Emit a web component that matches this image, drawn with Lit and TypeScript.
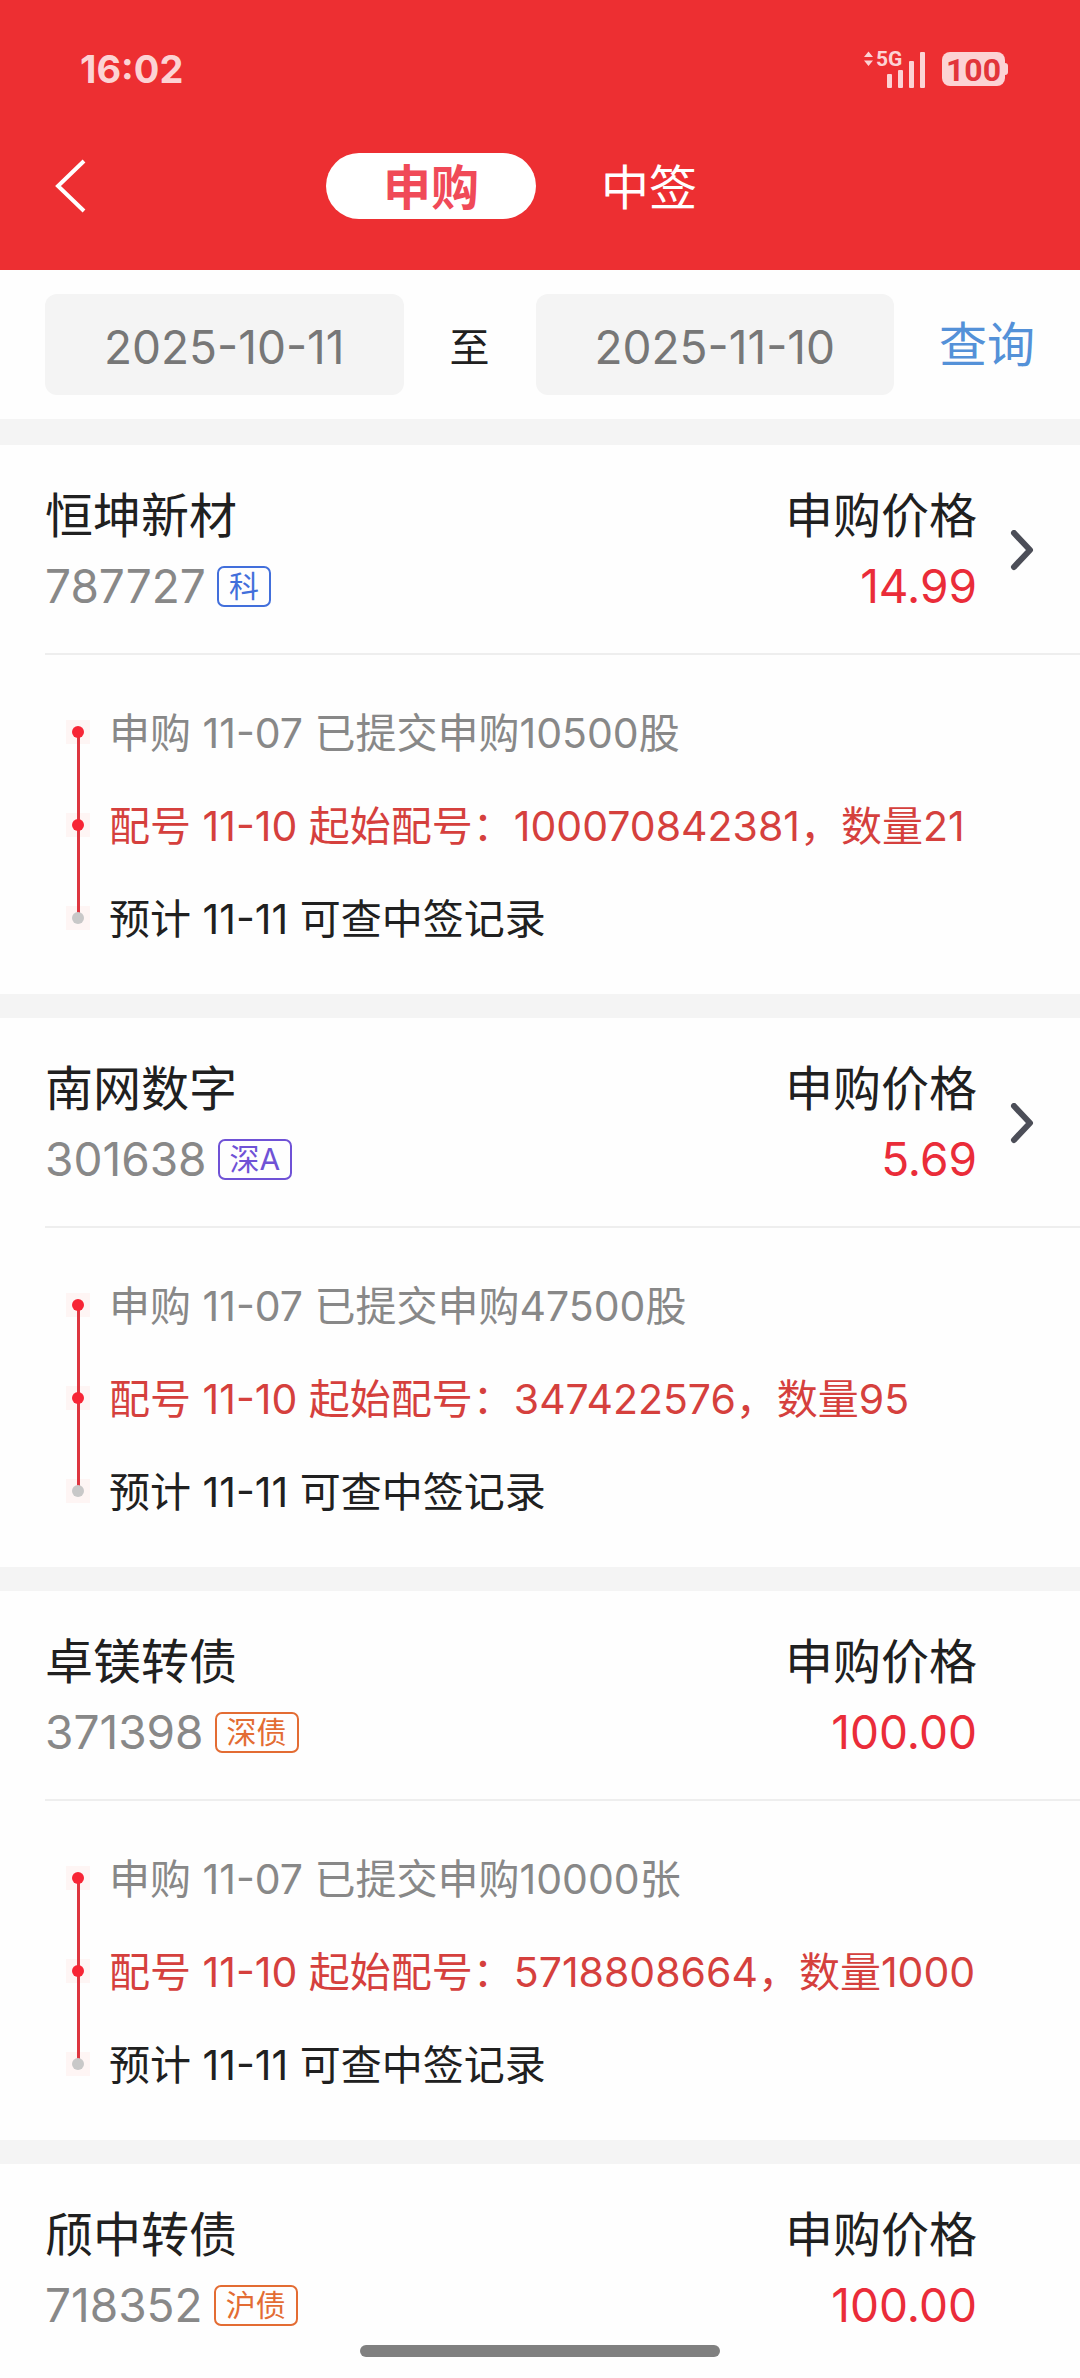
import { LitElement, html, css, nothing, svg } from "lit";
import { customElement, property, state } from "lit/decorators.js";
import { classMap } from "lit/directives/class-map.js";

interface Step {
  kind: "done" | "active" | "pending";
  text: string;
}

interface Offering {
  name: string;
  code: string;
  tag: string;
  tone: "blue" | "purple" | "orange";
  price: string;
  link: boolean;
  steps: Step[];
}

const steps = (submitted: string, start: string, count: string): Step[] => [
  { kind: "done", text: `申购 11-07 已提交申购${submitted}` },
  { kind: "active", text: `配号 11-10 起始配号：${start}，数量${count}` },
  { kind: "pending", text: "预计 11-11 可查中签记录" },
];

const OFFERINGS: Offering[] = [
  { name: "恒坤新材", code: "787727", tag: "科", tone: "blue", price: "14.99", link: true, steps: steps("10500股", "100070842381", "21") },
  { name: "南网数字", code: "301638", tag: "深A", tone: "purple", price: "5.69", link: true, steps: steps("47500股", "347422576", "95") },
  { name: "卓镁转债", code: "371398", tag: "深债", tone: "orange", price: "100.00", link: false, steps: steps("10000张", "5718808664", "1000") },
  { name: "颀中转债", code: "718352", tag: "沪债", tone: "orange", price: "100.00", link: false, steps: [] },
];

@customElement("status-bar")
class StatusBar extends LitElement {
  static styles = css`
    :host {
      display: flex;
      justify-content: space-between;
      align-items: center;
      height: 102px;
      padding: 36px 72px 0 80px;
      box-sizing: border-box;
      color: #fcd3d4;
      font-family: Inter, "Noto Sans CJK SC", sans-serif;
    }
    .time {
      font-size: 38px;
      line-height: 38px;
      font-weight: 700;
    }
    .right {
      display: flex;
      align-items: center;
      gap: 17px;
    }
    .signal {
      position: relative;
      width: 61px;
      height: 37px;
    }
    .signal svg {
      display: block;
    }
    .net {
      position: absolute;
      left: 12px;
      top: -3px;
      font: 700 21px/22px Roboto, sans-serif;
    }
    .battery {
      display: flex;
      align-items: center;
    }
    .cell {
      width: 63px;
      height: 34px;
      border-radius: 8px;
      background: #fcd3d4;
      color: #e2353a;
      text-align: center;
      font: 700 32px/37px Roboto, sans-serif;
    }
    .nub {
      width: 3px;
      height: 12px;
      border-radius: 0 3px 3px 0;
      background: #fcd3d4;
    }
  `;

  render() {
    const bars = [
      [23, 23],
      [34, 19],
      [45, 10],
      [56, 1],
    ];
    return html`
      <span class="time">16:02</span>
      <div class="right">
        <div class="signal">
          <svg width="61" height="37" viewBox="0 0 61 37" fill="currentColor" aria-hidden="true">
            <path d="M0 6 L4.500 0.500 L9 6 Z M0 9.500 H9 L4.500 15 Z" />
            ${bars.map(([x, y]) => svg`<rect x=${x} y=${y} width="5" height=${37 - y} rx="1"></rect>`)}
          </svg>
          <span class="net">5G</span>
        </div>
        <div class="battery">
          <span class="cell">100</span>
          <span class="nub"></span>
        </div>
      </div>
    `;
  }
}

@customElement("offering-card")
class OfferingCard extends LitElement {
  @property({ attribute: false }) item!: Offering;

  static styles = css`
    :host {
      display: block;
      background: #fefefe;
      color: #202020;
      font-size: 48px;
      line-height: 71px;
    }
    .head {
      display: flex;
      justify-content: space-between;
      padding: 35px 45px 31px;
      color: inherit;
      text-decoration: none;
    }
    .code {
      display: flex;
      align-items: center;
      gap: 11px;
      color: #888;
      font-size: 46px;
    }
    .tag {
      box-sizing: border-box;
      height: 41px;
      padding: 0 10px;
      border: 2px solid currentColor;
      border-radius: 7px;
      font-size: 30px;
      line-height: 37px;
    }
    .blue {
      color: #426fdb;
    }
    .purple {
      color: #6f52d6;
    }
    .orange {
      color: #e36c33;
    }
    .right {
      display: flex;
      align-items: center;
      gap: 33px;
      text-align: right;
    }
    .value {
      color: #ea2c39;
      font-size: 46px;
    }
    .chevron {
      display: block;
      width: 25px;
      height: 42px;
    }
    .steps {
      margin: 0;
      padding: 30px 0;
      list-style: none;
      font-size: 41px;
    }
    .body {
      margin-left: 45px;
      border-top: 2px solid #eee;
    }
    .step {
      display: grid;
      grid-template-columns: 24px 1fr;
      column-gap: 19px;
      align-items: center;
      height: 93px;
      padding-left: 21px;
    }
    .label {
      padding-top: 4px;
    }
    .rail {
      display: grid;
      grid-template-rows: 1fr 24px 1fr;
      justify-items: center;
      height: 93px;
    }
    .line {
      width: 3px;
      background: #dd3640;
    }
    .halo {
      display: grid;
      place-items: center;
      width: 24px;
      height: 24px;
      background: linear-gradient(#dd3640, #dd3640) center / 3px 100% no-repeat, #fef5f4;
    }
    .first .halo {
      background: linear-gradient(#dd3640, #dd3640) bottom / 3px 50% no-repeat, #fef5f4;
    }
    .last .halo {
      background: linear-gradient(#dd3640, #dd3640) top / 3px 50% no-repeat, #fef5f4;
    }
    .first .line:first-child,
    .last .line:last-child {
      visibility: hidden;
    }
    .dot {
      width: 12px;
      height: 12px;
      border-radius: 50%;
      background: #f72535;
    }
    .pending .dot {
      background: #c8c8c8;
    }
    .done {
      color: #888;
    }
    .active {
      color: #d5403d;
    }
  `;

  private head() {
    const { name, code, tag, tone, price } = this.item;
    return html`
      <div>
        <div>${name}</div>
        <div class="code">
          <span>${code}</span>
          <span class="tag ${tone}">${tag}</span>
        </div>
      </div>
      <div class="right">
        <div>
          <div>申购价格</div>
          <div class="value">${price}</div>
        </div>
        <svg class="chevron" viewBox="0 0 25 42" fill="none" aria-hidden="true">
          ${this.item.link
            ? svg`<path d="M4 3 L20 20 L4 37" stroke="#4c4e58" stroke-width="6" stroke-linecap="round" stroke-linejoin="round"></path>`
            : nothing}
        </svg>
      </div>
    `;
  }

  render() {
    const list = this.item.steps;
    return html`
      ${this.item.link
        ? html`<a class="head" href="#${this.item.code}">${this.head()}</a>`
        : html`<div class="head">${this.head()}</div>`}
      ${list.length
        ? html`<div class="body">
            <ol class="steps">
              ${list.map(
                (s, i) => html`<li
                  class=${classMap({ step: true, [s.kind]: true, first: i === 0, last: i === list.length - 1 })}
                >
                  <span class="rail">
                    <span class="line"></span>
                    <span class="halo"><span class="dot"></span></span>
                    <span class="line"></span>
                  </span>
                  <span class="label">${s.text}</span>
                </li>`
              )}
            </ol>
          </div>`
        : nothing}
    `;
  }
}

@customElement("app-root")
class AppRoot extends LitElement {
  @state() private tab = 0;

  static styles = css`
    :host {
      display: block;
      min-height: 100vh;
      background: #fefefe;
      font-family: Inter, "Noto Sans CJK SC", sans-serif;
      font-size: 48px;
    }
    button,
    input {
      margin: 0;
      padding: 0;
      border: 0;
      background: none;
      font: inherit;
    }
    .header {
      background: #ed2f32;
    }
    .nav {
      display: grid;
      grid-template-columns: 1fr auto 1fr;
      align-items: center;
      height: 168px;
      padding: 0 54px;
    }
    .back {
      justify-self: start;
      display: flex;
    }
    .tabs {
      display: flex;
      gap: 8px;
    }
    .tab {
      width: 210px;
      height: 66px;
      padding-top: 3px;
      border-radius: 33px;
      color: #fff;
      line-height: 63px;
    }
    .selected {
      background: #fff;
      color: #f04a58;
      font-weight: 700;
    }
    .query {
      display: flex;
      align-items: center;
      padding: 24px 45px;
    }
    .date {
      flex: 1;
      min-width: 0;
      box-sizing: border-box;
      height: 101px;
      padding-top: 4px;
      border-radius: 12px;
      background: #f4f4f4;
      color: #777;
      text-align: center;
      font-size: 46px;
    }
    .to {
      width: 132px;
      text-align: center;
      font-size: 40px;
      color: #202020;
    }
    .search {
      margin-left: 45px;
      color: #5491d8;
      line-height: 66px;
    }
    .list {
      display: flex;
      flex-direction: column;
      gap: 24px;
      border-top: 26px solid #f4f4f4;
      background: #f4f4f4;
    }
    .home {
      position: fixed;
      left: 50%;
      bottom: 21px;
      width: 360px;
      height: 12px;
      margin-left: -180px;
      border-radius: 6px;
      background: #808080;
    }
  `;

  render() {
    return html`
      <header class="header">
        <status-bar></status-bar>
        <nav class="nav">
          <button class="back" aria-label="返回">
            <svg width="34" height="54" viewBox="0 0 34 54" fill="none" stroke="#fff" stroke-width="4" aria-hidden="true">
              <path d="M30 2 L4 27 L30 52" />
            </svg>
          </button>
          <div class="tabs">
            ${["申购", "中签"].map(
              (label, i) => html`<button
                class=${classMap({ tab: true, selected: this.tab === i })}
                aria-pressed=${this.tab === i}
                @click=${() => (this.tab = i)}
              >
                ${label}
              </button>`
            )}
          </div>
        </nav>
      </header>
      <form class="query" @submit=${(e: Event) => e.preventDefault()}>
        <input class="date" type="text" aria-label="开始日期" value="2025-10-11" />
        <span class="to">至</span>
        <input class="date" type="text" aria-label="结束日期" value="2025-11-10" />
        <button class="search">查询</button>
      </form>
      <main class="list">${OFFERINGS.map((o) => html`<offering-card .item=${o}></offering-card>`)}</main>
      <div class="home"></div>
    `;
  }
}
